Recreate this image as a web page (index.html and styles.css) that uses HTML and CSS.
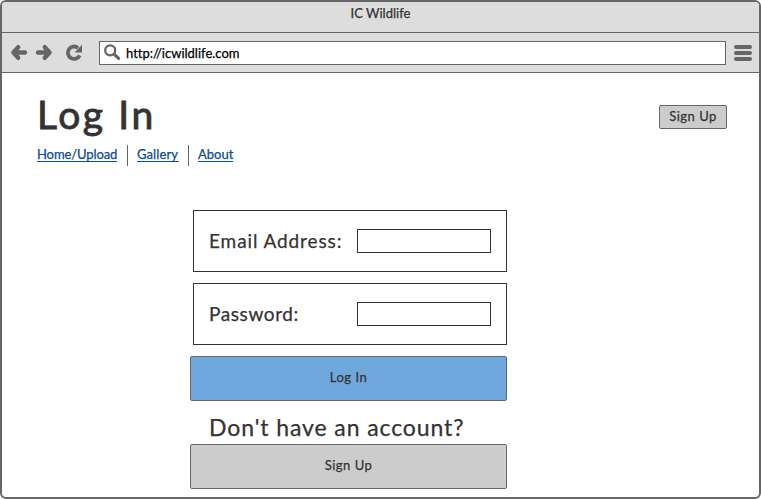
FILE: index.html
```html
<!DOCTYPE html>
<html lang="en">
<head>
<meta charset="utf-8">
<title>IC Wildlife</title>
<link rel="stylesheet" href="styles.css">
</head>
<body>
<div class="window">
  <header class="titlebar"><span class="window-title">IC Wildlife</span></header>
  <div class="toolbar">
    <svg class="nav-icons" width="76" height="20" viewBox="0 0 76 20" aria-hidden="true">
      <g fill="none" stroke="#666" stroke-width="4.400" stroke-linecap="round" stroke-linejoin="round">
        <path d="M8.200 4.200 3.400 9.500l4.800 5.300M4 9.500h11"/>
        <path d="M34.800 4.200l4.800 5.300-4.800 5.300M39 9.500H28"/>
        <path d="M69.700 12.400A6.200 6.200 0 1 1 68 4.900" stroke-width="3.800" stroke-linecap="butt"/>
      </g>
      <path d="M72 1.800v7.700h-7.500z" fill="#666"/>
      <path d="M8.200 4.200 3.400 9.500l4.800 5.300zM34.800 4.200l4.800 5.300-4.800 5.300z" fill="#666"/>
    </svg>
    <div class="address">
      <svg class="search-icon" width="17" height="17" viewBox="0 0 17 17" aria-hidden="true">
        <circle cx="6.200" cy="6.300" r="5" fill="none" stroke="#666" stroke-width="2.300"/>
        <path d="M10.300 10.300l4.300 4" stroke="#666" stroke-width="3.200" stroke-linecap="round"/>
      </svg>
      <span class="url">http://icwildlife.com</span>
    </div>
    <div class="menu"><i></i><i></i><i></i></div>
  </div>
  <main class="page">
    <div class="heading">
      <h1>Log In</h1>
      <button class="button signup-small">Sign Up</button>
    </div>
    <nav class="links">
      <a class="home" href="#">Home/Upload</a>
      <a class="gallery" href="#">Gallery</a>
      <a class="about" href="#">About</a>
    </nav>
    <form class="login">
      <label class="field"><span class="email">Email Address:</span><input type="text"></label>
      <label class="field"><span class="password">Password:</span><input type="password"></label>
      <button type="button" class="button wide primary">Log In</button>
      <p class="question">Don't have an account?</p>
      <button type="button" class="button wide signup">Sign Up</button>
    </form>
  </main>
</div>
</body>
</html>
```
FILE: styles.css
```css
* { box-sizing: border-box; }
body {
  margin: 0;
  background: #fff;
  color: #333;
  font: 13px/16px Lato, "Open Sans", sans-serif;
  font-variant-ligatures: none;
  -webkit-text-stroke: 0.25px currentColor;
}
.window {
  width: 761px;
  height: 499px;
  border: 2px solid #666;
  border-radius: 6px;
  overflow: hidden;
}
.titlebar {
  height: 31px;
  padding-top: 3px;
  border-bottom: 1px solid #666;
  background: #ddd;
  text-align: center;
}
.toolbar {
  display: flex;
  align-items: center;
  height: 40px;
  padding: 0 7px 0 8px;
  border-bottom: 1px solid #666;
  background: #ddd;
}
.nav-icons { flex: none; margin-right: 13px; }
.address {
  display: flex;
  align-items: center;
  width: 627px;
  height: 24px;
  padding-left: 4px;
  border: 1px solid #666;
  background: #fff;
}
.search-icon { margin-right: 5px; }
.url { color: #000; }
.menu { display: grid; gap: 2px; width: 18px; margin-left: 8px; }
.menu i { height: 4px; border-radius: 2px; background: #666; }
.page { padding: 20px 32px 0 35px; }
.heading { display: flex; justify-content: space-between; height: 52px; }
h1 {
  margin: -2px 0 0;
  font-size: 39px;
  line-height: 46px;
  font-weight: 400;
  letter-spacing: 2.6px;
  -webkit-text-stroke: 0.9px currentColor;
}
.button {
  padding: 0 0 3px;
  border: 1px solid #666;
  border-radius: 2px;
  background: #ccc;
  color: #333;
  font: inherit;
  letter-spacing: 0.5px;
}
.signup-small { width: 68px; height: 24px; margin-top: 12px; padding-bottom: 2px; }
.links { display: flex; height: 21px; }
.links a {
  height: 17px;
  padding-top: 1px;
  border-bottom: 1px solid #0a4a96;
  color: #0a4a96;
  text-decoration: none;
  white-space: nowrap;
}
.links a + a { position: relative; margin-left: 20px; }
.links a + a::before {
  content: "";
  position: absolute;
  top: 0;
  left: -10px;
  width: 1px;
  height: 21px;
  background: #666;
}
.home { width: 80px; letter-spacing: -0.1px; }
.links .gallery { width: 42px; letter-spacing: 0.1px; }
.links .about { width: 35px; margin-left: 19px; }
.login { width: 317px; margin: 44px 0 0 153px; }
.field {
  display: flex;
  align-items: center;
  justify-content: space-between;
  height: 62px;
  margin: 0 0 11px 3px;
  padding: 0 15px;
  border: 1px solid #333;
  font-size: 19px;
}
.email { letter-spacing: 0.9px; }
.password { letter-spacing: 0.6px; }
.field input { width: 134px; height: 24px; padding: 0 4px; border: 1px solid #333; background: #fff; font: inherit; }
.wide { display: block; width: 317px; height: 45px; }
.primary { background: #6fa8dc; }
.question {
  height: 43px;
  margin: 0;
  padding: 12px 0 0 19px;
  font-size: 23px;
  line-height: 28px;
  letter-spacing: 0.9px;
  white-space: nowrap;
}
```
